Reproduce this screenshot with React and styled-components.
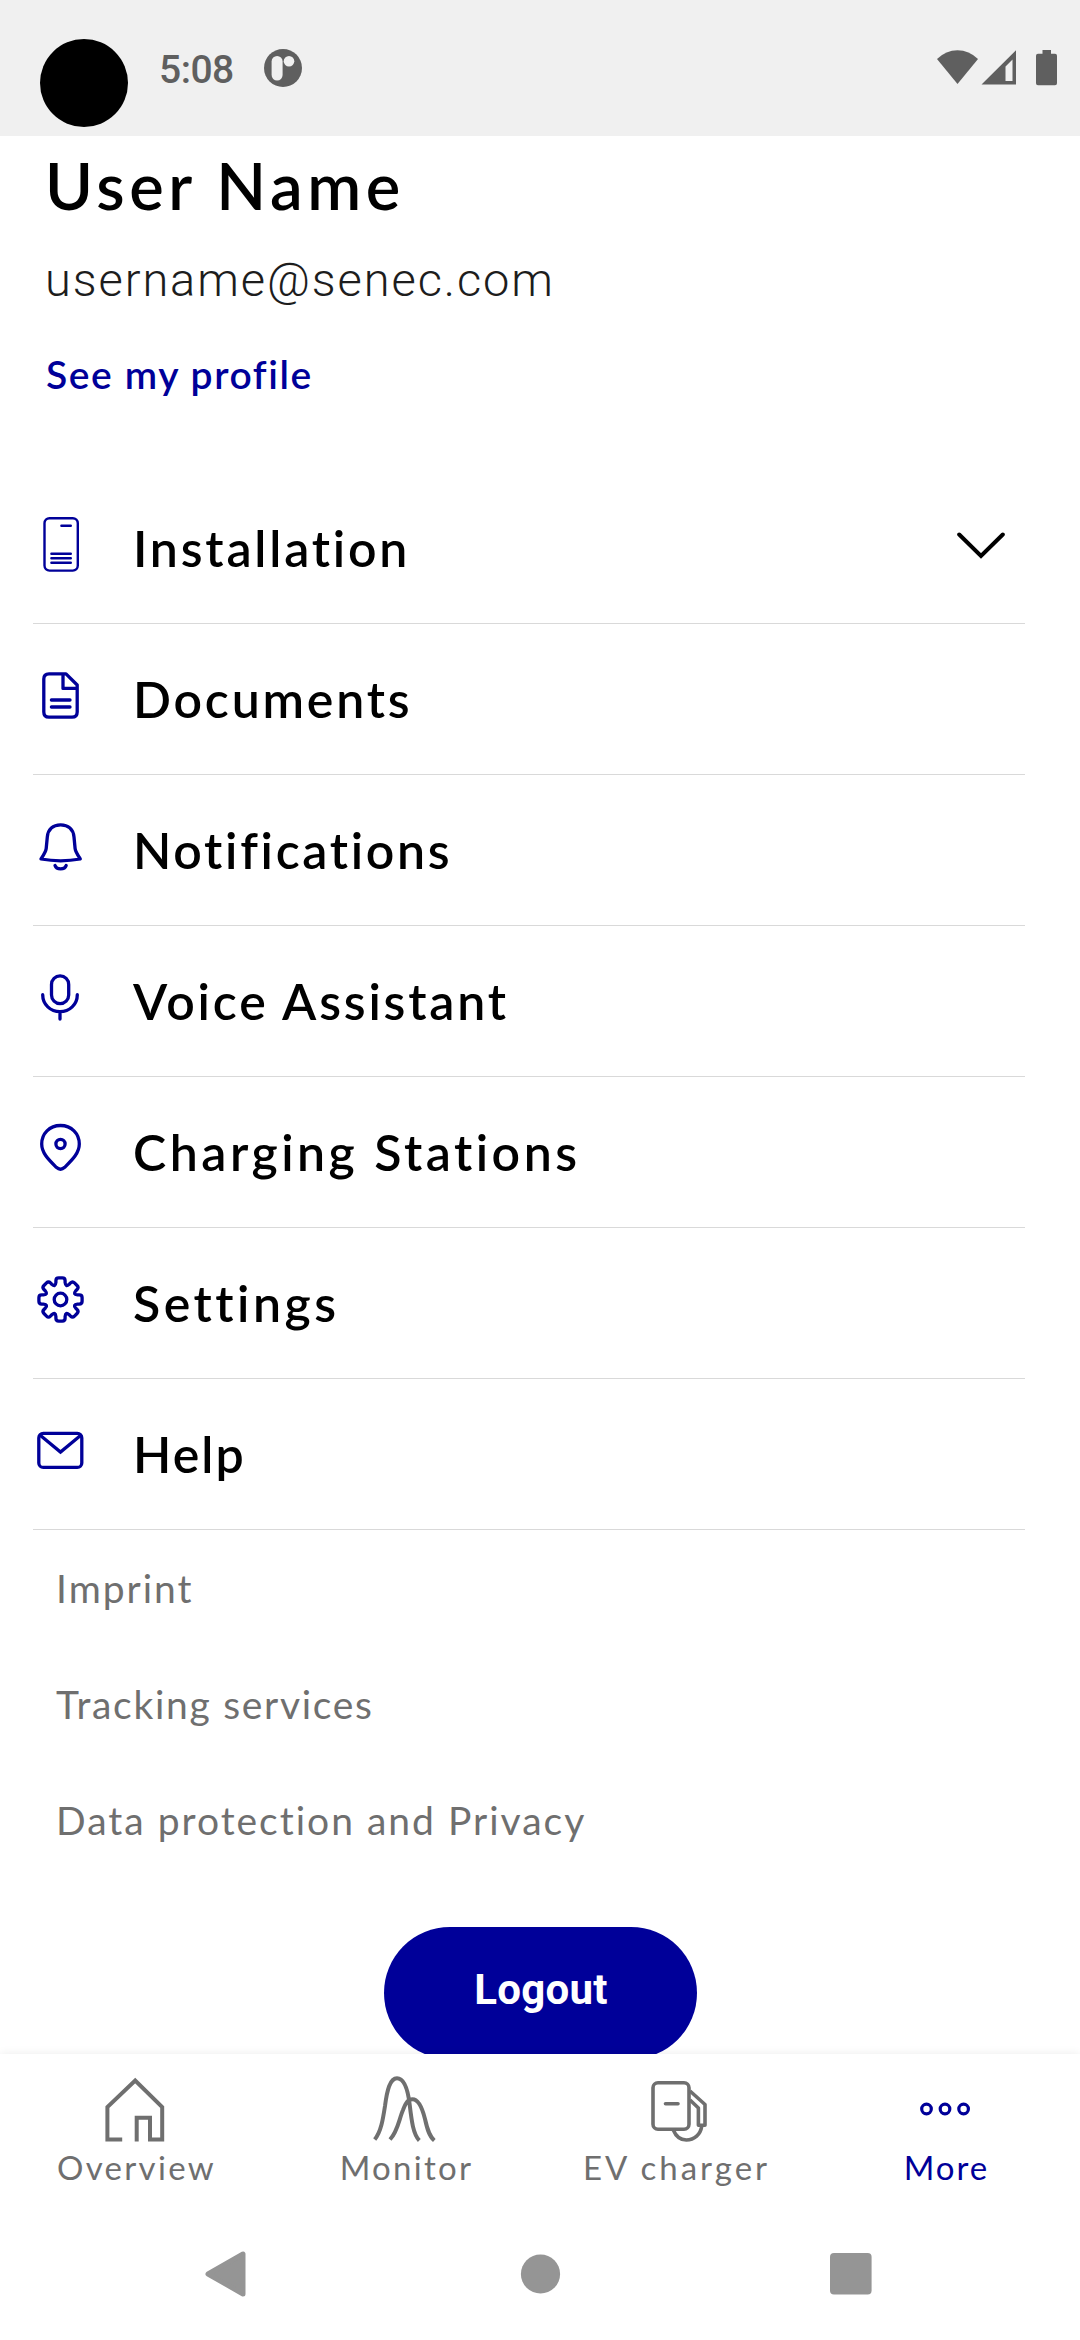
import React from 'react';
import styled, { createGlobalStyle } from 'styled-components';

const BLUE = '#000099';
const GREY = '#6f6f6f';

//outline of the settings gear, eight rounded teeth around the center
const gearPath = (cx, cy) => {
    const at = (t, r, i) => {
        const a = (i * Math.PI) / 4;
        const x = cx + t * Math.cos(a) + r * Math.sin(a);
        const y = cy + t * Math.sin(a) - r * Math.cos(a);
        return `${x.toFixed(2)} ${y.toFixed(2)}`;
    };
    let d = `M${at(-4.6, 17, 0)}`;
    for (let i = 0; i < 8; i++) {
        d += `L${at(-4.6, 18.8, i)}Q${at(-4.6, 21.6, i)} ${at(-1.8, 21.6, i)}`;
        d += `L${at(1.8, 21.6, i)}Q${at(4.6, 21.6, i)} ${at(4.6, 18.8, i)}L${at(4.6, 17, i)}`;
        d += `Q${at(0, 13, i + 0.5)} ${at(-4.6, 17, i + 1)}`;
    }
    return d + 'Z';
};

const menuItems = [
    {
        label: 'Installation',
        spacing: 2.8,
        expandable: true,
        icon: (
            <g strokeWidth="2.4">
                <rect x="11.5" y="6.2" width="33.3" height="52.4" rx="5" />
                <path d="M28.4 13.7H37.8M18.4 41.7H37.8M18.4 46.3H37.8M18.4 50.7H37.8" />
            </g>
        ),
    },
    {
        label: 'Documents',
        spacing: 2.8,
        icon: <path d="M33 10.8H16Q10.8 10.8 10.8 16V49Q10.8 54.2 16 54.2H39Q44.2 54.2 44.2 49V22ZM30 11V25.4H44M18.4 37H37M18.4 44H37" />,
    },
    {
        label: 'Notifications',
        spacing: 2.7,
        icon: <path d="M8 45C11 40.5 12.9 37.5 13.2 34.5L14.3 23C15 15 20 10.8 27.6 10.8S40.3 15 41 23L42.1 34.5C42.4 37.5 44.3 40.5 47.3 45Q27.6 48.6 8 45ZM22 51.5C23.5 56 31.7 56 33.2 51.5" />,
    },
    {
        label: 'Voice Assistant',
        spacing: 2.8,
        icon: (
            <g>
                <rect x="18.5" y="10.8" width="17.2" height="27.8" rx="8.6" />
                <path d="M9.7 29.7C9.7 39.5 17.5 46.7 27 46.7S44.3 39.5 44.3 29.7M27 46.7V54" />
            </g>
        ),
    },
    {
        label: 'Charging Stations',
        spacing: 3.5,
        icon: (
            <g>
                <path d="M27.5 9.5C16.5 9.5 8.7 17.5 8.7 28C8.7 37 15.5 43.5 23.3 51.3Q27.5 55.2 31.7 51.3C39.5 43.5 46.3 37 46.3 28C46.3 17.5 38.5 9.5 27.5 9.5Z" />
                <circle cx="27.5" cy="28" r="4.6" />
            </g>
        ),
    },
    {
        label: 'Settings',
        spacing: 3.5,
        icon: (
            <g>
                <path d={gearPath(27.5, 32.5)} />
                <circle cx="27.5" cy="32.5" r="6.3" />
            </g>
        ),
    },
    {
        label: 'Help',
        spacing: 2.1,
        icon: (
            <g>
                <rect x="5.8" y="15.4" width="43" height="34" rx="4.5" />
                <path d="M7.5 17.5L27.5 34L47.5 17.5" strokeLinejoin="miter" />
            </g>
        ),
    },
];

const links = [
    { label: 'Imprint', spacing: 2 },
    { label: 'Tracking services', spacing: 1.7 },
    { label: 'Data protection and Privacy', spacing: 2 },
];

const tabs = [
    {
        label: 'Overview',
        spacing: 2.3,
        icon: <path d="M22.2 65.5H7.4V33L35.2 6.5L62.2 33V65.5H50V43.7H36.7V67.5" />,
    },
    {
        label: 'Monitor',
        spacing: 2.3,
        icon: (
            <path d="M4.7 65.5C11 58 13 45 15 32C17 16 20 4.2 27 4.2C35 4.2 38 17 39.6 30C41.5 46 43 60 49.3 66.5M20 65.5C28 57 29 45 33 36C36 28.5 38 25.3 42.5 25.3C48 25.3 52 33 55 45C57 54 59 62 64.3 66.5" />
        ),
    },
    {
        label: 'EV charger',
        spacing: 3,
        icon: (
            <g strokeWidth="3.6" strokeLinejoin="round">
                <rect x="13" y="8.8" width="36" height="46.4" rx="5" />
                <path d="M25.5 29.7H38" strokeLinecap="round" />
                <path d="M50 17L65 30.5V51.3H58.4V34L50 26M33.3 56C36 62.5 40.5 66 46.3 66C54.5 66 60.5 60.5 61.8 52" />
            </g>
        ),
    },
    {
        label: 'More',
        spacing: 2,
        active: true,
        icon: (
            <g strokeWidth="3.2">
                <circle cx="16.5" cy="35" r="4.8" />
                <circle cx="35" cy="35" r="4.8" />
                <circle cx="53.6" cy="35" r="4.8" />
            </g>
        ),
    },
];

const StatusBar = () => (
    <Status>
        <Camera />
        <Time>5:08</Time>
        <svg width="38" height="38" viewBox="0 0 38 38">
            <circle cx="19" cy="19" r="19" fill="#5f5f5f" />
            <rect x="7.6" y="7" width="11" height="24.5" rx="5.5" fill="#f0f0f0" />
            <circle cx="25" cy="12.3" r="5.3" fill="#f0f0f0" />
        </svg>
        <Signals width="122" height="38" viewBox="0 0 122 38">
            <path d="M0 10Q9 1.2 20.5 1.2T41 10L20.5 35Z" />
            <path d="M79 1.2V35.5H44.5ZM75.5 10.5L68.5 17.5V32H75.5Z" fillRule="evenodd" />
            <path d="M105.5 1H114V4.8H118Q120 4.8 120 6.8V34.3Q120 36.3 118 36.3H101Q99 36.3 99 34.3V6.8Q99 4.8 101 4.8H105.5Z" />
        </Signals>
    </Status>
);

const App = () => {
    return (
        <Screen>
            <GlobalStyle />
            <StatusBar />
            <Content>
                <Profile>
                    <UserName>User Name</UserName>
                    <Email>username@senec.com</Email>
                    <ProfileLink>See my profile</ProfileLink>
                </Profile>
                <Menu>
                    {menuItems.map((item) => (
                        <MenuRow key={item.label}>
                            <MenuIcon viewBox="0 0 54 65">{item.icon}</MenuIcon>
                            <MenuLabel $spacing={item.spacing}>{item.label}</MenuLabel>
                            {item.expandable && (
                                <Chevron viewBox="0 0 48 28">
                                    <path d="M2.2 3.5L24 25L45.8 3.5" />
                                </Chevron>
                            )}
                        </MenuRow>
                    ))}
                </Menu>
                <Links>
                    {links.map((link) => (
                        <LegalLink key={link.label} $spacing={link.spacing}>{link.label}</LegalLink>
                    ))}
                </Links>
                <Logout>Logout</Logout>
            </Content>
            <TabBar>
                {tabs.map((tab) => (
                    <Tab key={tab.label} $active={tab.active}>
                        <TabIcon viewBox="0 0 70 70">{tab.icon}</TabIcon>
                        <TabLabel $spacing={tab.spacing}>{tab.label}</TabLabel>
                    </Tab>
                ))}
            </TabBar>
            <SystemBar>
                <svg width="42" height="46" viewBox="0 0 42 46">
                    <path d="M3 23L38 3V43Z" strokeWidth="5" strokeLinejoin="round" stroke="#959595" />
                </svg>
                <svg width="44" height="40" viewBox="0 0 44 40">
                    <circle cx="23.5" cy="20" r="19.6" />
                </svg>
                <svg width="42" height="42" viewBox="0 0 42 42">
                    <rect width="41.6" height="41.6" rx="4" />
                </svg>
            </SystemBar>
        </Screen>
    );
};

const GlobalStyle = createGlobalStyle`
  * {
    box-sizing: border-box;
    margin: 0;
    padding: 0;
  }
  body {
    background: #fff;
    font-family: Lato, "Open Sans", sans-serif;
  }
`;

const Screen = styled.div`
  display: flex;
  flex-direction: column;
  width: 1080px;
  height: 2340px;
  overflow: hidden;
  background: #fff;
`;

const Status = styled.header`
  display: flex;
  align-items: center;
  height: 136px;
  flex: none;
  padding: 0 21px 0 40px;
  background: #f0f0f0;
`;

const Camera = styled.div`
  width: 88px;
  height: 88px;
  margin-top: 30px;
  border-radius: 50%;
  background: #000;
`;

const Time = styled.span`
  width: 136px;
  padding: 3px 0 0 31px;
  font: 500 39px/50px Roboto, sans-serif;
  letter-spacing: -0.5px;
  color: #5f5f5f;
`;

const Signals = styled.svg`
  margin-left: auto;
  fill: #5f5f5f;
`;

const Content = styled.main`
  display: flex;
  flex-direction: column;
  flex: none;
  height: 1918px;
  overflow: hidden;
`;

const Profile = styled.section`
  height: 337px;
  flex: none;
  padding: 10px 0 0 42px;
`;

const UserName = styled.h1`
  padding-left: 3px;
  font-size: 65px;
  line-height: 78px;
  font-weight: 600;
  letter-spacing: 4.6px;
  color: #000;
`;

const Email = styled.p`
  margin-top: 26px;
  padding-left: 3px;
  font: 300 47px/60px Roboto, sans-serif;
  letter-spacing: 1.9px;
  color: #1d1d1d;
`;

const ProfileLink = styled.p`
  margin-top: 39px;
  padding-left: 4px;
  font-size: 39px;
  line-height: 50px;
  font-weight: 600;
  letter-spacing: 1.6px;
  color: ${BLUE};
`;

const Menu = styled.ul`
  flex: none;
  margin: 0 55px 0 33px;
  list-style: none;
`;

const MenuRow = styled.li`
  display: flex;
  align-items: center;
  height: 151px;
  border-bottom: 1px solid #d9d9d9;
`;

const MenuIcon = styled.svg`
  width: 54px;
  height: 65px;
  margin: 0 46px 7px 0;
  fill: none;
  stroke: ${BLUE};
  stroke-width: 3.3;
  stroke-linecap: round;
  stroke-linejoin: round;
`;

const MenuLabel = styled.span`
  font-size: 50px;
  line-height: 60px;
  font-weight: 600;
  letter-spacing: ${({ $spacing }) => $spacing}px;
  color: #000;
`;

const Chevron = styled.svg`
  width: 48px;
  height: 28px;
  margin: 0 20px 7px auto;
  fill: none;
  stroke: #000;
  stroke-width: 4;
  stroke-linecap: round;
`;

const Links = styled.nav`
  flex: none;
  padding-left: 56px;
`;

const LegalLink = styled.p`
  font-size: 39px;
  line-height: 116px;
  letter-spacing: ${({ $spacing }) => $spacing}px;
  color: ${GREY};
`;

const Logout = styled.button`
  flex: none;
  align-self: center;
  width: 313px;
  height: 132px;
  margin-top: 49px;
  padding: 0 0 6px 2px;
  border: none;
  border-radius: 66px;
  background: ${BLUE};
  font: 700 42px/50px Roboto, sans-serif;
  letter-spacing: 0.3px;
  color: #fff;
`;

const TabBar = styled.nav`
  display: grid;
  grid-template-columns: repeat(4, 1fr);
  flex: none;
  height: 154px;
  padding-top: 20px;
  z-index: 1;
  background: #fff;
  box-shadow: 0 0 9px rgba(0, 0, 0, 0.08);
`;

const Tab = styled.div`
  display: flex;
  flex-direction: column;
  align-items: center;
  gap: 3px;
  color: ${({ $active }) => ($active ? BLUE : GREY)};
`;

const TabIcon = styled.svg`
  width: 70px;
  height: 70px;
  fill: none;
  stroke: currentColor;
  stroke-width: 4;
`;

const TabLabel = styled.span`
  padding-left: 3px;
  font-size: 33px;
  line-height: 40px;
  letter-spacing: ${({ $spacing }) => $spacing}px;
`;

const SystemBar = styled.footer`
  display: flex;
  align-items: center;
  justify-content: space-between;
  flex: 1;
  padding: 0 208px 0 205px;
  z-index: 2;
  background: #fff;
  svg {
    fill: #959595;
  }
`;

export default App;
